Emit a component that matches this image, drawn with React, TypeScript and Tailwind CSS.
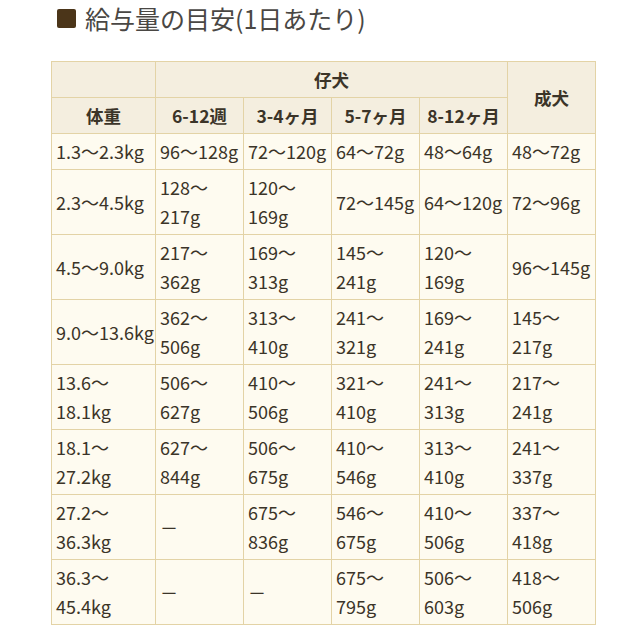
import React from "react";

const rows: [string, string, string, string, string, string][] = [
  ["1.3～2.3kg", "96～128g", "72～120g", "64～72g", "48～64g", "48～72g"],
  ["2.3～4.5kg", "128～\n217g", "120～\n169g", "72～145g", "64～120g", "72～96g"],
  ["4.5～9.0kg", "217～\n362g", "169～\n313g", "145～\n241g", "120～\n169g", "96～145g"],
  ["9.0～13.6kg", "362～\n506g", "313～\n410g", "241～\n321g", "169～\n241g", "145～\n217g"],
  ["13.6～\n18.1kg", "506～\n627g", "410～\n506g", "321～\n410g", "241～\n313g", "217～\n241g"],
  ["18.1～\n27.2kg", "627～\n844g", "506～\n675g", "410～\n546g", "313～\n410g", "241～\n337g"],
  ["27.2～\n36.3kg", "－", "675～\n836g", "546～\n675g", "410～\n506g", "337～\n418g"],
  ["36.3～\n45.4kg", "－", "－", "675～\n795g", "506～\n603g", "418～\n506g"],
];

const App: React.FC = () => {
  return (
    <div
      className="w-[641px] h-[641px] bg-white text-[#3b3428]"
      style={{ fontFamily: '"Noto Sans CJK JP", "Noto Sans", sans-serif' }}
    >
      <h1 className="pl-[57px] pt-[2px] text-[25px] leading-[32px] text-[#4a4744] font-normal flex items-center">
        <span className="inline-block w-[19px] h-[19px] rounded-[2px] bg-[#4b3519] mr-[9px]"></span>
        給与量の目安(1日あたり)
      </h1>
      <table className="ml-[51px] mt-[27px] border-collapse table-fixed w-[544px] text-[18px] leading-[29px]">
        <colgroup>
          <col className="w-[104px]" />
          <col className="w-[88px]" />
          <col className="w-[88px]" />
          <col className="w-[88px]" />
          <col className="w-[88px]" />
          <col className="w-[88px]" />
        </colgroup>
        <thead>
          <tr className="bg-[#f4eedf] h-[36px]">
            <th className="border border-[#e3d3a6]"></th>
            <th colSpan={4} className="border border-[#e3d3a6] font-bold text-[17.5px]">仔犬</th>
            <th rowSpan={2} className="border border-[#e3d3a6] font-bold text-[17.5px]">成犬</th>
          </tr>
          <tr className="bg-[#f4eedf] h-[36px]">
            <th className="border border-[#e3d3a6] font-bold text-[17.5px]">体重</th>
            <th className="border border-[#e3d3a6] font-bold text-[17.5px]">6-12週</th>
            <th className="border border-[#e3d3a6] font-bold text-[17.5px]">3-4ヶ月</th>
            <th className="border border-[#e3d3a6] font-bold text-[17.5px]">5-7ヶ月</th>
            <th className="border border-[#e3d3a6] font-bold text-[17.5px]">8-12ヶ月</th>
          </tr>
        </thead>
        <tbody className="bg-[#fefbf0]">
          {rows.map((r, i) => (
            <tr key={i} className={i === 0 ? "h-[36px]" : "h-[65px]"}>
              {r.map((c, j) => (
                <td
                  key={j}
                  className="border border-[#e3d3a6] pl-[4px] pr-0 py-[3px] whitespace-pre-line align-middle"
                >
                  {c}
                </td>
              ))}
            </tr>
          ))}
        </tbody>
      </table>
    </div>
  );
};

export default App;
